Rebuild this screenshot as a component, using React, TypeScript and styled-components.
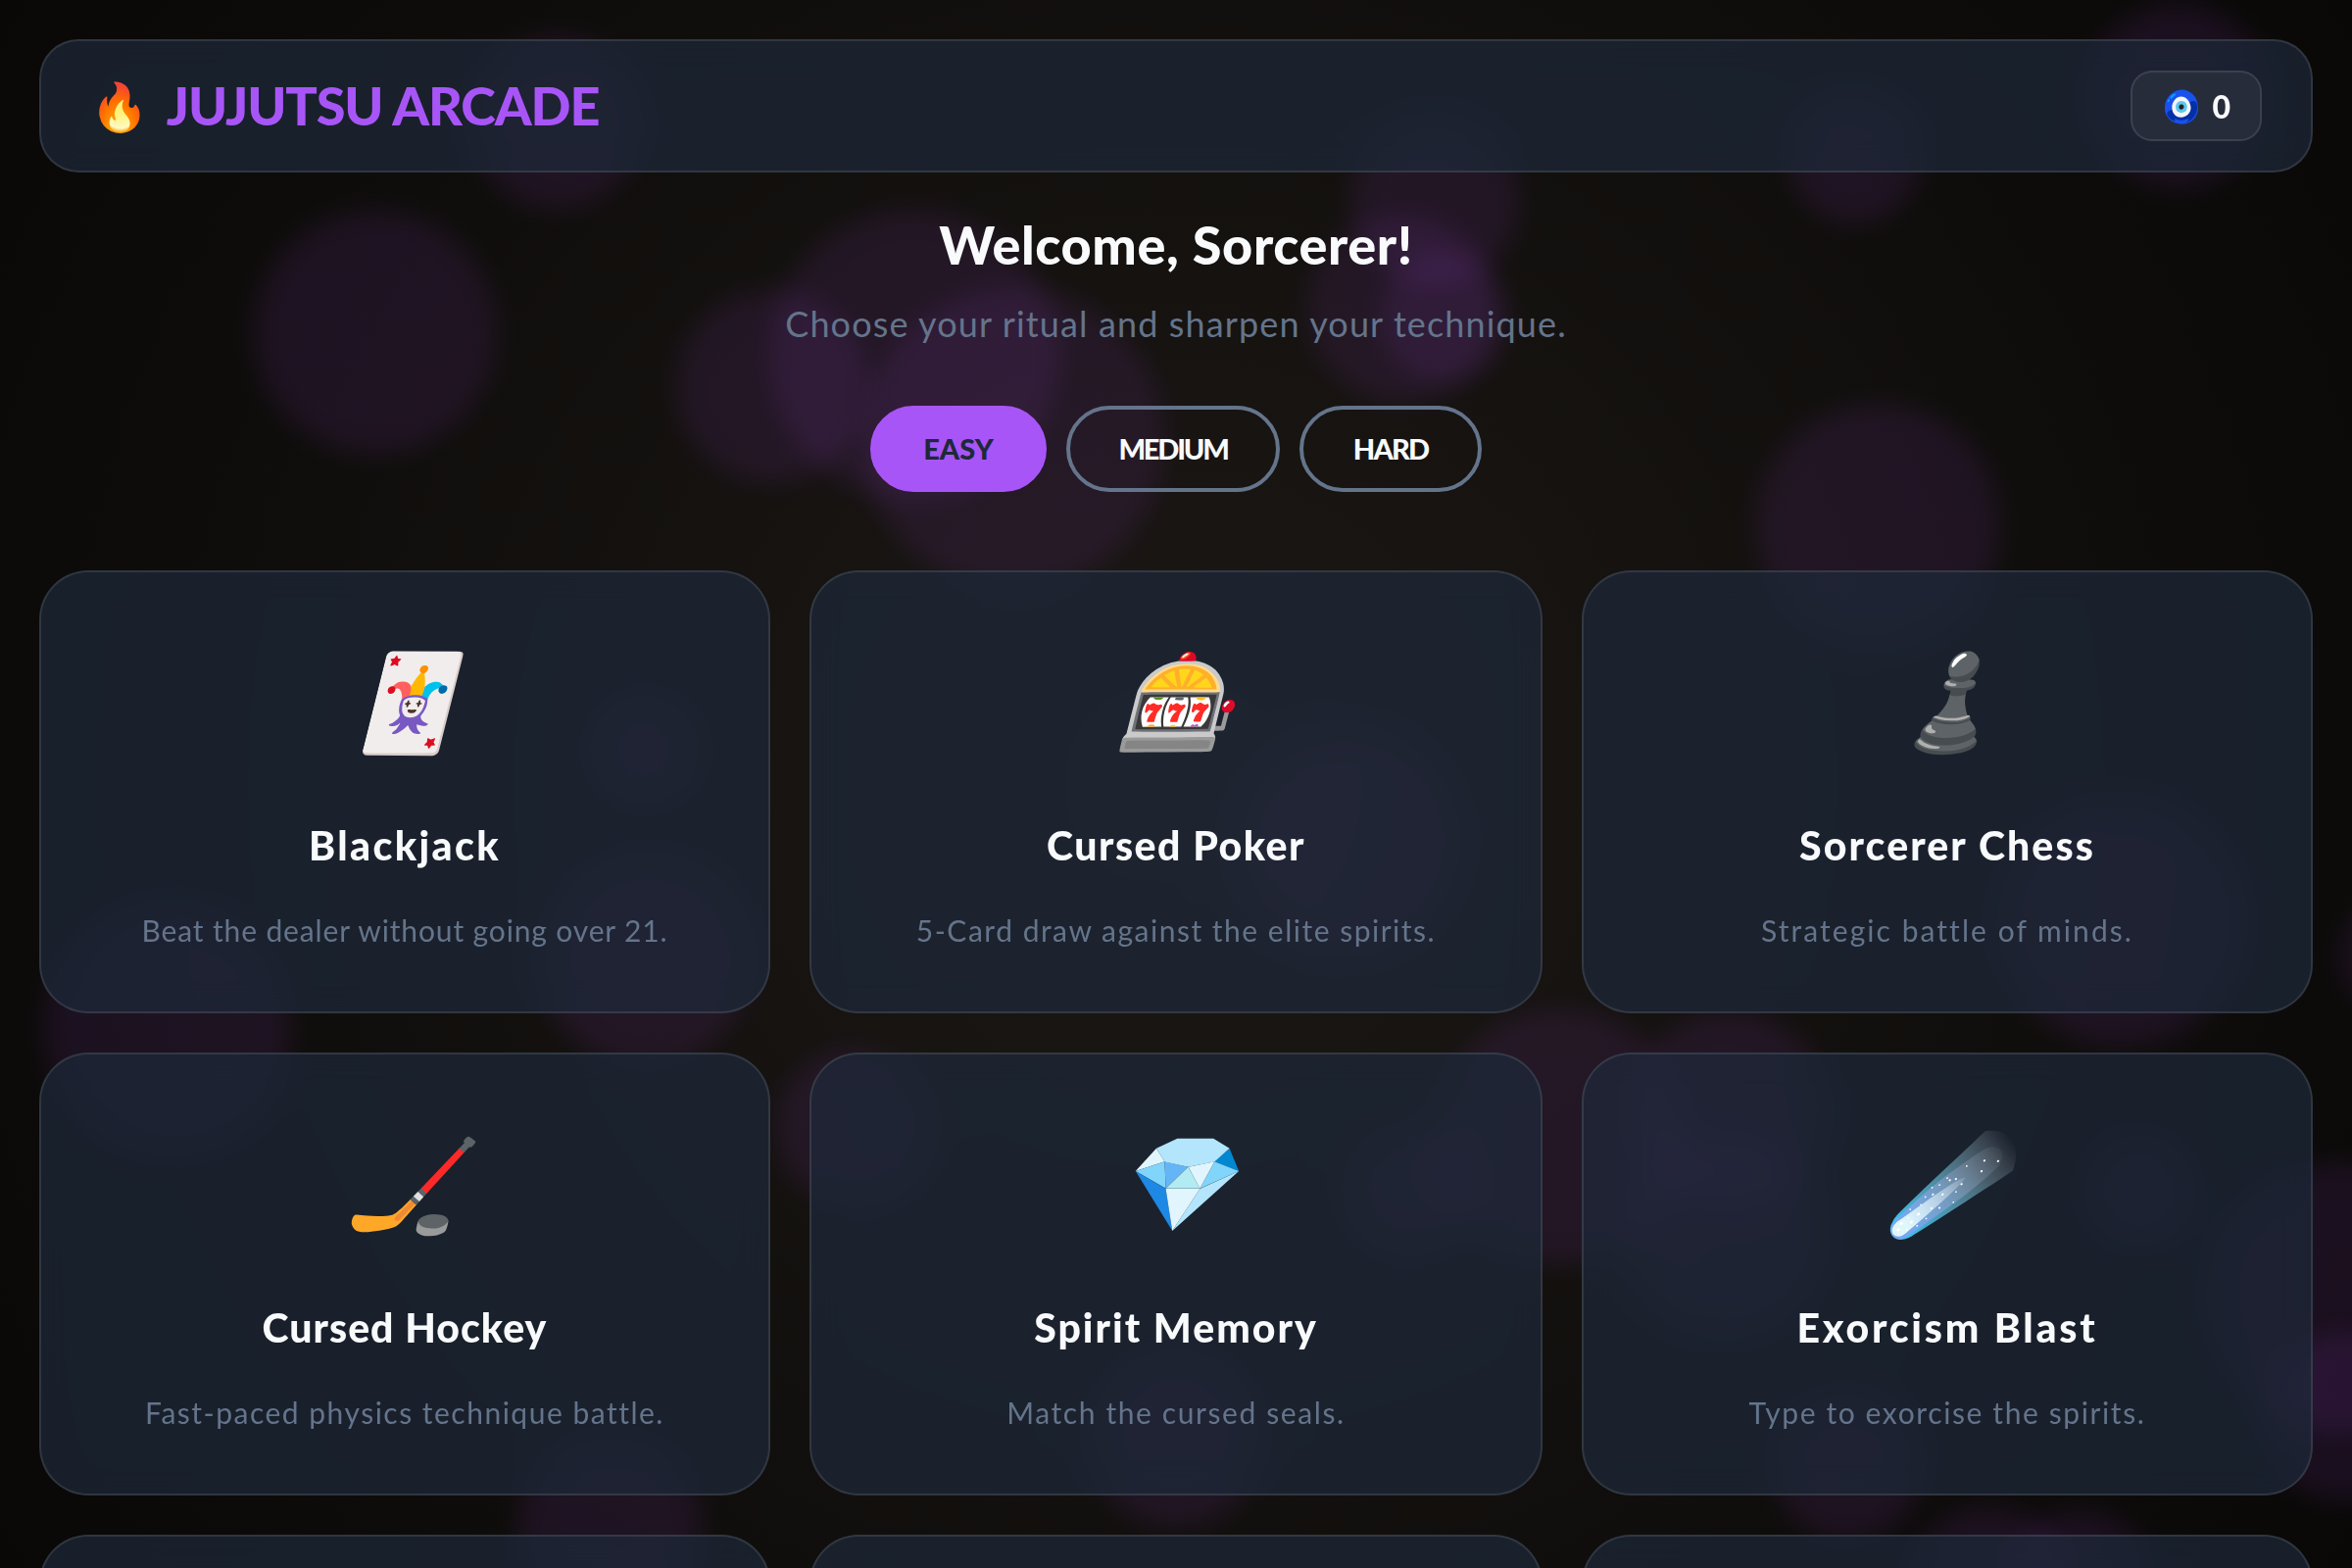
import React from 'react';
import styled, { createGlobalStyle } from 'styled-components';

const font = `Lato, "Noto Sans", sans-serif`;

const Global = createGlobalStyle`
  * { box-sizing: border-box; margin: 0; }
  html, body { height: 1600px; overflow: hidden; }
  body { background: #0a0908; font-family: ${font}; color: #f8fafc; }
`;

const Page = styled.div`
  position: relative;
  width: 2400px;
  height: 1600px;
  overflow: hidden;
  background: radial-gradient(circle at center, #1c1815 0%, #090807 100%);
`;

const Orb = styled.div<{ $x: number; $y: number; $r: number }>`
  position: absolute;
  left: ${p => p.$x - p.$r}px;
  top: ${p => p.$y - p.$r}px;
  width: ${p => p.$r * 2}px;
  height: ${p => p.$r * 2}px;
  border-radius: 50%;
  background: #a347e0;
  opacity: 0.1;
  filter: blur(13px);
`;

const Content = styled.div`
  position: relative;
  padding: 40px;
`;

const Header = styled.header`
  height: 136px;
  display: flex;
  align-items: center;
  justify-content: space-between;
  padding: 0 50px;
  border: 2px solid rgba(255, 255, 255, 0.1);
  border-radius: 40px;
  background: rgba(30, 41, 59, 0.7);
  backdrop-filter: blur(16px);
`;

const Brand = styled.h1`
  display: flex;
  align-items: center;
  gap: 19px;
  font-size: 54px;
  line-height: 64px;
  letter-spacing: -1.15px;
  color: #a855f7;
  font-weight: 900;
  white-space: nowrap;
`;
const Flame = styled.span`
  font-size: 48px;
`;

const Score = styled.div`
  height: 72px;
  padding: 0 30px;
  display: flex;
  align-items: center;
  gap: 11px;
  border: 2px solid rgba(255, 255, 255, 0.1);
  border-radius: 22px;
  background: rgba(255, 255, 255, 0.05);
  font-size: 32px;
  font-weight: 900;
`;

const Intro = styled.section`
  height: 406px;
  display: flex;
  flex-direction: column;
  align-items: center;
`;
const Welcome = styled.h2`
  margin-top: 42px;
  font-size: 54px;
  line-height: 64px;
  letter-spacing: 0.6px;
  font-weight: 900;
`;
const Tagline = styled.p`
  margin-top: 24px;
  font-size: 36px;
  line-height: 48px;
  letter-spacing: 1.13px;
  color: #64748b;
`;
const Levels = styled.div`
  display: flex;
  gap: 20px;
  margin-top: 60px;
`;
const Level = styled.button<{ $active?: boolean; $width: number; $track?: number }>`
  width: ${p => p.$width}px;
  height: 88px;
  padding: 0 0 2px;
  border: 4px solid ${p => (p.$active ? '#a855f7' : '#64748b')};
  border-radius: 44px;
  background: ${p => (p.$active ? '#a855f7' : 'transparent')};
  color: ${p => (p.$active ? '#1e293b' : '#f8fafc')};
  font: 900 29px ${font};
  letter-spacing: ${p => p.$track ?? 0}px;
`;

const Grid = styled.main`
  display: grid;
  grid-template-columns: 746px 748px 746px;
  gap: 40px;
`;
const Card = styled.article`
  height: 452px;
  display: flex;
  flex-direction: column;
  align-items: center;
  padding-top: 54px;
  border: 2px solid rgba(255, 255, 255, 0.1);
  border-radius: 50px;
  background: rgba(30, 41, 59, 0.7);
  backdrop-filter: blur(16px);
`;
const Icon = styled.i`
  font-size: 96px;
  line-height: 150px;
`;
const Name = styled.h3<{ $track: number }>`
  margin-top: 50px;
  font-size: 41px;
  line-height: 50px;
  letter-spacing: ${p => p.$track}px;
  font-weight: 900;
`;
const Blurb = styled.p<{ $track: number }>`
  margin-top: 41px;
  font-size: 30px;
  line-height: 40px;
  letter-spacing: ${p => p.$track}px;
  color: #64748b;
`;

type Game = { icon: string; name: string; text: string; nameTrack: number; textTrack: number };

const games: Game[] = [
  { icon: '🃏', name: 'Blackjack', text: 'Beat the dealer without going over 21.', nameTrack: 2.4, textTrack: 0.86 },
  { icon: '🎰', name: 'Cursed Poker', text: '5-Card draw against the elite spirits.', nameTrack: 1.5, textTrack: 1.5 },
  { icon: '♟️', name: 'Sorcerer Chess', text: 'Strategic battle of minds.', nameTrack: 2.1, textTrack: 2.05 },
  { icon: '🏒', name: 'Cursed Hockey', text: 'Fast-paced physics technique battle.', nameTrack: 1, textTrack: 1.5 },
  { icon: '💎', name: 'Spirit Memory', text: 'Match the cursed seals.', nameTrack: 2, textTrack: 1.6 },
  { icon: '☄️', name: 'Exorcism Blast', text: 'Type to exorcise the spirits.', nameTrack: 2.8, textTrack: 1.6 },
];

const orbs: [number, number, number][] = [
  [569, 125, 88], [383, 339, 124], [2222, 98, 94], [1892, 160, 68],
  [1464, 205, 86], [1430, 315, 96], [1474, 324, 66], [932, 362, 148],
  [788, 394, 98], [1034, 448, 154], [1916, 536, 124], [655, 765, 54],
  [658, 980, 108], [170, 1050, 126], [1376, 860, 120], [2165, 942, 126],
  [872, 1150, 80], [1592, 1160, 130], [1765, 1135, 102], [1762, 1260, 104],
  [1440, 1216, 64], [2186, 1216, 54], [2390, 1324, 138], [2392, 1446, 86],
  [622, 1560, 94], [1200, 1468, 90], [1886, 1496, 76], [2030, 1622, 84],
  [2124, 1618, 76], [2450, 975, 62],
];

export default function App() {
  return (
    <Page>
      <Global />
      {orbs.map(([x, y, r], i) => <Orb key={i} $x={x} $y={y} $r={r} />)}
      <Content>
        <Header>
          <Brand><Flame>🔥</Flame><span>JUJUTSU ARCADE</span></Brand>
          <Score><span>🧿</span><span>0</span></Score>
        </Header>
        <Intro>
          <Welcome>Welcome, Sorcerer!</Welcome>
          <Tagline>Choose your ritual and sharpen your technique.</Tagline>
          <Levels>
            <Level $active $width={180}>EASY</Level>
            <Level $width={218} $track={-2.2}>MEDIUM</Level>
            <Level $width={186} $track={-1.8}>HARD</Level>
          </Levels>
        </Intro>
        <Grid>
          {games.map(g => (
            <Card key={g.name}>
              <Icon>{g.icon}</Icon>
              <Name $track={g.nameTrack}>{g.name}</Name>
              <Blurb $track={g.textTrack}>{g.text}</Blurb>
            </Card>
          ))}
          <Card />
          <Card />
          <Card />
        </Grid>
      </Content>
    </Page>
  );
}
